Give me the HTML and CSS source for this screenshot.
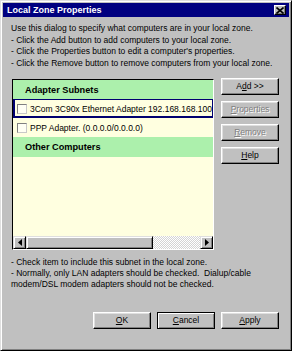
FILE: index.html
```html
<!DOCTYPE html>
<html>
<head>
<meta charset="utf-8">
<title>Local Zone Properties</title>
<link rel="stylesheet" href="styles.css">
</head>
<body>
<div class="window">
  <div class="titlebar">
    <span class="title">Local Zone Properties</span>
    <span class="close">
      <svg width="8" height="7" viewBox="0 0 8 7"><path d="M0.5 0.5 L7.5 6.5 M7.5 0.5 L0.5 6.5" stroke="#000" stroke-width="1.6"/></svg>
    </span>
  </div>
  <div class="body">
    <div class="intro">
      Use this dialog to specify what computers are in your local zone.<br>
      - Click the Add button to add computers to your local zone.<br>
      - Click the Properties button to edit a computer's properties.<br>
      - Click the Remove button to remove computers from your local zone.
    </div>
    <div class="main">
      <div class="listbox">
        <div class="list">
          <div class="group">Adapter Subnets</div>
          <div class="item focus"><span class="check"></span><span class="label">3Com 3C90x Ethernet Adapter 192.168.168.100</span></div>
          <div class="item"><span class="check"></span><span class="label">PPP Adapter. (0.0.0.0/0.0.0.0)</span></div>
          <div class="group group-2">Other Computers</div>
        </div>
        <div class="hscroll">
          <span class="sbtn"><svg width="4" height="7" viewBox="0 0 4 7"><path d="M4 0 L0 3.5 L4 7 Z" fill="#000"/></svg></span>
          <span class="thumb"></span>
          <span class="track"></span>
          <span class="sbtn"><svg width="4" height="7" viewBox="0 0 4 7"><path d="M0 0 L4 3.5 L0 7 Z" fill="#000"/></svg></span>
        </div>
      </div>
      <div class="side">
        <button class="btn">A<u>d</u>d &gt;&gt;</button>
        <button class="btn disabled"><u>P</u>roperties</button>
        <button class="btn disabled"><u>R</u>emove</button>
        <button class="btn"><u>H</u>elp</button>
      </div>
    </div>
    <div class="notes">- Check item to include this subnet in the local zone.<br>- Normally, only LAN adapters should be checked.&nbsp; Dialup/cable<br>modem/DSL modem adapters should not be checked.</div>
    <div class="footer">
      <button class="btn"><u>O</u>K</button>
      <button class="btn default"><u>C</u>ancel</button>
      <button class="btn"><u>A</u>pply</button>
    </div>
  </div>
</div>
</body>
</html>
```
FILE: styles.css
```css
html, body {
  margin: 0;
  padding: 0;
  background: #c0c0c0;
}

.window {
  width: 292px;
  height: 351px;
  box-sizing: border-box;
  background: #c0c0c0;
  border: 1px solid;
  border-color: #dfdfdf #000 #000 #dfdfdf;
  box-shadow: inset 1px 1px 0 #fff, inset -1px -1px 0 #808080;
  padding: 2px;
  display: flex;
  flex-direction: column;
  font-family: "Liberation Sans", Arial, sans-serif;
  font-size: 8.5px;
  color: #000;
}

.titlebar {
  height: 14px;
  background: #000080;
  display: flex;
  align-items: center;
  justify-content: space-between;
  padding: 0 3px 0 4px;
}

.title {
  color: #fff;
  font-weight: bold;
  font-size: 9px;
  white-space: nowrap;
}

.close {
  width: 12px;
  height: 10px;
  box-sizing: border-box;
  background: #c0c0c0;
  border: 1px solid;
  border-color: #fff #000 #000 #fff;
  box-shadow: inset -1px -1px 0 #808080;
  display: flex;
  align-items: center;
  justify-content: center;
}

.close svg { display: block; }

.body {
  flex: 1;
  display: flex;
  flex-direction: column;
  padding: 6px 10px 19px 8px;
}

.intro {
  line-height: 11.5px;
  white-space: nowrap;
}

.main {
  display: flex;
  margin-top: 9px;
  margin-left: 1px;
}

.listbox {
  width: 202px;
  height: 171px;
  margin-top: 1px;
  box-sizing: border-box;
  border: 1px solid;
  border-color: #000 #fff #fff #000;
  display: flex;
  flex-direction: column;
  overflow: hidden;
}

.list {
  flex: 1;
  background: #ffffe0;
  display: flex;
  flex-direction: column;
}

.group {
  height: 19px;
  background: #acf0ac;
  font-weight: bold;
  font-size: 9.2px;
  display: flex;
  align-items: center;
  padding-left: 12px;
}

.group-2 { height: 20px; }

.item {
  height: 19px;
  box-sizing: border-box;
  display: flex;
  align-items: center;
  padding-left: 4px;
  white-space: nowrap;
  overflow: hidden;
}

.item.focus {
  box-shadow: inset 0 0 0 1px #000070, inset 1px -1px 0 1px #000070;
}

.check {
  flex: none;
  width: 10px;
  height: 10px;
  box-sizing: border-box;
  border: 1px solid;
  border-color: #808080 #c8c8c8 #c8c8c8 #808080;
  background: #fffff4;
  margin-right: 3px;
}

.label { white-space: nowrap; }

.hscroll {
  height: 13px;
  display: flex;
}

.sbtn {
  width: 13px;
  height: 13px;
  box-sizing: border-box;
  background: #c0c0c0;
  border: 1px solid;
  border-color: #dfdfdf #000 #000 #dfdfdf;
  box-shadow: inset 1px 1px 0 #fff, inset -1px -1px 0 #808080;
  display: flex;
  align-items: center;
  justify-content: center;
}

.thumb {
  width: 127px;
  height: 13px;
  box-sizing: border-box;
  background: #c0c0c0;
  border: 1px solid;
  border-color: #dfdfdf #000 #000 #dfdfdf;
  box-shadow: inset 1px 1px 0 #fff, inset -1px -1px 0 #808080;
}

.track {
  flex: 1;
  background: repeating-conic-gradient(#fff 0 25%, #d4d4d4 0 50%) 0 0 / 2px 2px;
}

.side {
  width: 58px;
  margin-left: 7px;
  display: flex;
  flex-direction: column;
  gap: 6px;
}

.btn {
  width: 58px;
  height: 17px;
  box-sizing: border-box;
  padding: 0;
  margin: 0;
  background: #c0c0c0;
  border: 1px solid;
  border-color: #fff #000 #000 #fff;
  box-shadow: inset -1px -1px 0 #808080, inset 1px 1px 0 #dfdfdf;
  font-family: "Liberation Sans", Arial, sans-serif;
  font-size: 8.5px;
  color: #000;
  line-height: 1;
}

.btn u { text-underline-offset: 1px; }

.btn.disabled {
  color: #808080;
  text-shadow: 1px 1px 0 #fff;
}

.btn.default {
  border-color: #000;
  box-shadow: inset 1px 1px 0 #fff, inset -1px -1px 0 #808080;
}

.notes {
  margin-top: 7px;
  line-height: 11px;
  white-space: nowrap;
}

.footer {
  margin-top: auto;
  display: flex;
  justify-content: flex-end;
  gap: 6px;
}
```
